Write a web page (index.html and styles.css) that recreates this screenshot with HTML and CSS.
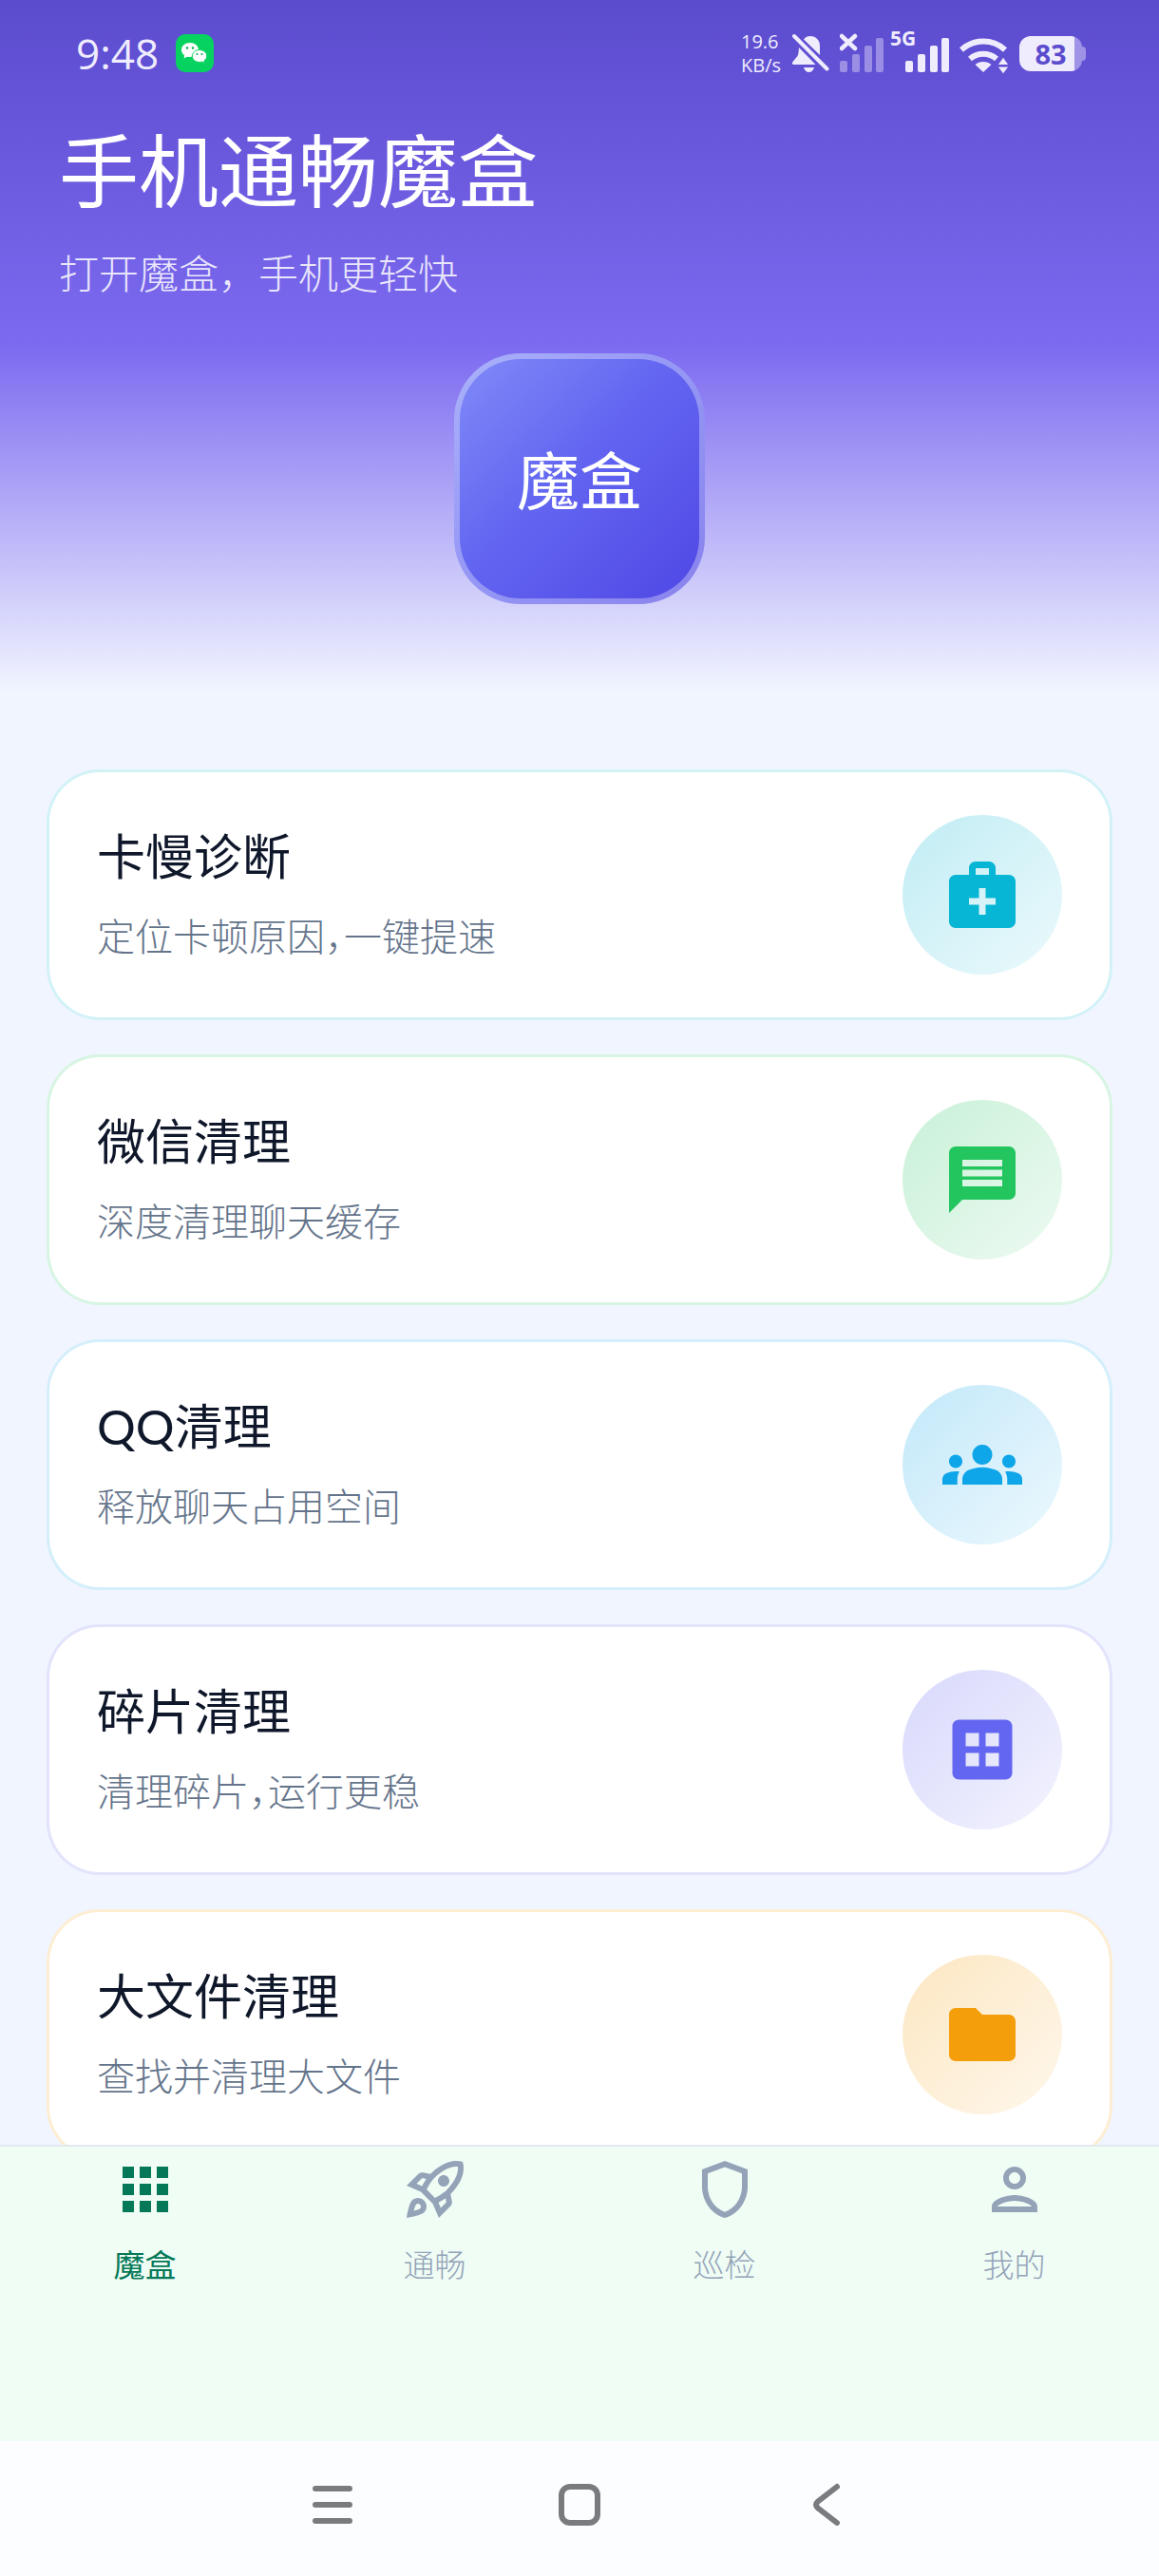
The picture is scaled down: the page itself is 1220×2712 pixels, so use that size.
FILE: index.html
```html
<!DOCTYPE html>
<html lang="zh-CN">
  <head>
    <meta charset="UTF-8" />
    <meta name="viewport" content="width=device-width, initial-scale=1.0" />
    <title>手机通畅魔盒</title>
    <link rel="stylesheet" href="styles.css">
  </head>
  <body>
    <main class="content">
      <header class="hero">
        <div class="status-bar">
          <span class="status-time">9:48</span>
          <svg class="status-app" width="40" height="40" viewBox="0 0 40 40">
            <rect width="40" height="40" rx="10" fill="#06d35f" />
            <path d="M15 9C9.900 9 6 12.300 6 16.500c0 2.400 1.300 4.400 3.200 5.800L8.500 25.500l3.300-1.800c1 .300 2 .400 3.200.400 5 0 9-3.300 9-7.500S20 9 15 9z" fill="#fff" />
            <path d="M25 16.500c-4.300 0-7.700 2.900-7.700 6.500s3.400 6.500 7.700 6.500c.900 0 1.800-.100 2.600-.400l2.900 1.500-.700-2.600c1.700-1.200 2.900-3 2.900-5 0-3.600-3.400-6.500-7.700-6.500z" fill="#fff" stroke="#06d35f" />
            <g fill="#06a84d">
              <circle cx="12" cy="14.500" r="1.200" />
              <circle cx="18" cy="14.500" r="1.200" />
              <circle cx="22.500" cy="21" r="1" />
              <circle cx="27.500" cy="21" r="1" />
            </g>
          </svg>
          <div class="status-right">
            <span class="status-speed">19.6<br />KB/s</span>
            <svg width="40" height="44" viewBox="0 0 40 44" fill="currentColor">
              <path d="M13 7.500C14.500 5 17 4 20 4c6 0 10 4.500 10 10.500v9.500z" />
              <path d="M8 16 25.500 34H2.500c-1.600 0-2-1.800-1-3L6.500 25c1.200-2.500 1.200-6 1.500-9z" />
              <path d="M13 37h11c-1 3.500-3 5-5.500 5S14 40.500 13 37z" />
              <path d="M3 4 37.500 38.500" stroke="currentColor" stroke-width="4" stroke-linecap="round" />
            </svg>
            <svg width="46" height="44" viewBox="0 0 46 44" fill="currentColor">
              <path d="M2 4 16 17M16 4 2 17" stroke="currentColor" stroke-width="4.500" stroke-linecap="round" />
              <g opacity=".4">
                <rect x="0" y="30" width="8" height="12" rx="2" />
                <rect x="13" y="23" width="8" height="19" rx="2" />
                <rect x="26" y="14" width="8" height="28" rx="2" />
                <rect x="38" y="6" width="8" height="36" rx="2" />
              </g>
            </svg>
            <div class="signal">
              <span class="signal-type">5G</span>
              <svg width="46" height="44" viewBox="0 0 46 44" fill="currentColor">
                <rect x="0" y="30" width="8" height="12" rx="2" />
                <rect x="13" y="23" width="8" height="19" rx="2" />
                <rect x="26" y="14" width="8" height="28" rx="2" />
                <rect x="38" y="6" width="8" height="36" rx="2" />
              </svg>
            </div>
            <svg class="wifi" width="52" height="44" viewBox="0 0 52 44">
              <g fill="none" stroke="currentColor" stroke-width="6">
                <path d="M2 18.500C15 6.500 35 6.500 48 18.500" />
                <path d="M11 28c8-7 20-7 28 0" />
              </g>
              <path d="M16.500 34c4.500-4 12.500-4 17 0L25 42z" fill="currentColor" />
              <path d="M46 26l6 8.500H40zM46 44l6-8H40z" fill="currentColor" stroke="#614fd3" stroke-width="1" />
            </svg>
            <div class="battery">
              <span class="battery-level">83</span>
            </div>
          </div>
        </div>
        <h1>手机通畅魔盒</h1>
        <p class="slogan">打开魔盒，手机更轻快</p>
        <button type="button" class="magic-box">魔盒</button>
      </header>

      <section class="card-list">
        <a class="card card-cyan" href="#diagnose">
          <div class="card-text">
            <h2>卡慢诊断</h2>
            <p>定位卡顿原因，一键提速</p>
          </div>
          <span class="card-icon">
            <svg viewBox="0 0 24 24"><path d="M20 6h-4V4c0-1.100-.900-2-2-2h-4c-1.100 0-2 .900-2 2v2H4c-1.100 0-2 .900-2 2v12c0 1.100.900 2 2 2h16c1.100 0 2-.900 2-2V8c0-1.100-.900-2-2-2zM10 4h4v2h-4V4zm6 11h-3v3h-2v-3H8v-2h3v-3h2v3h3v2z" /></svg>
          </span>
        </a>
        <a class="card card-green" href="#wechat">
          <div class="card-text">
            <h2>微信清理</h2>
            <p>深度清理聊天缓存</p>
          </div>
          <span class="card-icon">
            <svg viewBox="0 0 24 24"><path d="M20 2H4c-1.100 0-1.990.900-1.990 2L2 22l4-4h14c1.100 0 2-.900 2-2V4c0-1.100-.900-2-2-2zm-2 12H6v-2h12v2zm0-3H6V9h12v2zm0-3H6V6h12v2z" /></svg>
          </span>
        </a>
        <a class="card card-sky" href="#qq">
          <div class="card-text">
            <h2>QQ清理</h2>
            <p>释放聊天占用空间</p>
          </div>
          <span class="card-icon">
            <svg viewBox="0 0 24 24"><path d="M12 12.750c1.630 0 3.070.390 4.240.900 1.080.480 1.760 1.560 1.760 2.730V18H6v-1.610c0-1.180.680-2.260 1.760-2.730 1.170-.520 2.610-.910 4.240-.910zM4 13c1.100 0 2-.900 2-2s-.900-2-2-2-2 .900-2 2 .900 2 2 2zm1.130 1.100c-.370-.060-.740-.100-1.130-.100-.990 0-1.930.210-2.780.580C.480 14.900 0 15.620 0 16.430V18h4.500v-1.610c0-.830.230-1.610.630-2.290zM20 13c1.100 0 2-.900 2-2s-.900-2-2-2-2 .900-2 2 .900 2 2 2zm4 3.430c0-.810-.480-1.530-1.220-1.850-.850-.370-1.790-.580-2.780-.580-.390 0-.760.040-1.130.100.400.680.630 1.460.630 2.290V18H24v-1.570zM12 6c1.660 0 3 1.340 3 3s-1.340 3-3 3-3-1.340-3-3 1.340-3 3-3z" /></svg>
          </span>
        </a>
        <a class="card card-indigo" href="#fragment">
          <div class="card-text">
            <h2>碎片清理</h2>
            <p>清理碎片，运行更稳</p>
          </div>
          <span class="card-icon">
            <svg viewBox="0 0 24 24"><path d="M19 3H5c-1.100 0-2 .900-2 2v14c0 1.100.900 2 2 2h14c1.100 0 2-.900 2-2V5c0-1.100-.900-2-2-2zM11 17H7v-4h4v4zm0-6H7V7h4v4zm6 6h-4v-4h4v4zm0-6h-4V7h4v4z" /></svg>
          </span>
        </a>
        <a class="card card-amber" href="#bigfile">
          <div class="card-text">
            <h2>大文件清理</h2>
            <p>查找并清理大文件</p>
          </div>
          <span class="card-icon">
            <svg viewBox="0 0 24 24"><path d="M10 4H4c-1.100 0-1.990.900-1.990 2L2 18c0 1.100.900 2 2 2h16c1.100 0 2-.900 2-2V8c0-1.100-.900-2-2-2h-8l-2-2z" /></svg>
          </span>
        </a>
      </section>
    </main>

    <nav class="tab-bar">
      <a class="tab active" href="#box">
        <svg viewBox="0 0 24 24"><path d="M4 8h4V4H4v4zm6 12h4v-4h-4v4zm-6 0h4v-4H4v4zm0-6h4v-4H4v4zm6 0h4v-4h-4v4zm6-10v4h4V4h-4zm-6 4h4V4h-4v4zm6 6h4v-4h-4v4zm0 6h4v-4h-4v4z" /></svg>
        <span>魔盒</span>
      </a>
      <a class="tab" href="#boost">
        <svg viewBox="0 0 24 24"><path d="M6 15c-.830 0-1.580.340-2.120.880C2.700 17.060 2 22 2 22s4.940-.700 6.120-1.880C8.660 19.580 9 18.830 9 18c0-1.660-1.340-3-3-3zm.710 3.710c-.280.280-2.170.760-2.170.760s.470-1.880.760-2.170c.170-.190.420-.300.700-.300.550 0 1 .450 1 1 0 .280-.110.530-.290.710zm10.710-5.060c6.360-6.360 4.240-11.310 4.240-11.310S16.710.220 10.350 6.580l-2.490-.500c-.650-.130-1.330.080-1.810.550L2 10.690l5 2.140L11.170 17l2.140 5 4.050-4.050c.470-.470.680-1.150.550-1.810l-.490-2.490zM7.410 10.830l-1.910-.820 1.970-1.970 1.440.290c-.570.830-1.080 1.700-1.500 2.500zm6.580 7.670-.820-1.910c.800-.420 1.670-.930 2.490-1.500l.290 1.440-1.960 1.970zM16 12.240c-1.320 1.320-3.380 2.400-4.040 2.730l-2.930-2.930c.320-.650 1.400-2.710 2.730-4.040 4.680-4.680 8.230-3.990 8.230-3.990s.690 3.550-3.990 8.230zM15 11c1.100 0 2-.900 2-2s-.900-2-2-2-2 .900-2 2 .900 2 2 2z" /></svg>
        <span>通畅</span>
      </a>
      <a class="tab" href="#inspect">
        <svg viewBox="0 0 24 24"><path d="M12 2 4 5v6.090c0 5.050 3.410 9.760 8 10.910 4.590-1.150 8-5.860 8-10.910V5l-8-3zm6 9.090c0 4-2.550 7.700-6 8.830-3.450-1.130-6-4.820-6-8.830v-4.700l6-2.250 6 2.250v4.700z" /></svg>
        <span>巡检</span>
      </a>
      <a class="tab" href="#mine">
        <svg viewBox="0 0 24 24"><path d="M12 6c1.100 0 2 .900 2 2s-.900 2-2 2-2-.900-2-2 .900-2 2-2m0 10c2.700 0 5.800 1.290 6 2H6c.230-.720 3.310-2 6-2m0-12C9.790 4 8 5.790 8 8s1.790 4 4 4 4-1.790 4-4-1.790-4-4-4zm0 10c-2.670 0-8 1.340-8 4v2h16v-2c0-2.660-5.330-4-8-4z" /></svg>
        <span>我的</span>
      </a>
    </nav>

    <footer class="system-nav">
      <button type="button" aria-label="最近任务">
        <svg viewBox="0 0 48 48"><path d="M6 7h36M6 24h36M6 41h36" /></svg>
      </button>
      <button type="button" aria-label="主屏幕">
        <svg viewBox="0 0 48 48"><rect x="5" y="5" width="38" height="38" rx="9" /></svg>
      </button>
      <button type="button" aria-label="返回">
        <svg viewBox="0 0 48 48"><path d="M35 5 15 20.500Q11 24 15 27.500L35 43" /></svg>
      </button>
    </footer>
  </body>
</html>
```
FILE: styles.css
```css
* {
  box-sizing: border-box;
}
body {
  margin: 0;
  height: 100vh;
  display: flex;
  flex-direction: column;
  background-color: #f1f5ff;
  color: #0f172a;
  font-family: "Noto Sans CJK SC", "Noto Sans", sans-serif;
}
h1,
h2,
p {
  margin: 0;
}
a {
  color: inherit;
  text-decoration: none;
}
button {
  padding: 0;
  border: none;
  background: none;
  font-family: inherit;
  cursor: pointer;
}
.content {
  flex: 1;
  min-height: 0;
  overflow-y: auto;
  scrollbar-width: none;
}

/* header */
.hero {
  padding: 0 62px 92px;
  background: linear-gradient(#5b4bcd 0, #7c6af0 50%, #f1f5ff 100%);
  color: #fff;
}
.hero h1 {
  margin-top: 14px;
  font-size: 84px;
  line-height: 100px;
  font-weight: 400;
}
.slogan {
  margin-top: 30px;
  font-size: 42px;
  line-height: 60px;
  font-weight: 300;
  color: #e9e6fc;
}
.magic-box {
  display: block;
  width: 264px;
  height: 264px;
  margin: 56px auto 0;
  padding-bottom: 4px;
  border: 6px solid rgba(255, 255, 255, 0.33);
  border-radius: 70px;
  background: linear-gradient(135deg, #818cf8, #6366f1 45%, #4f46e5) border-box;
  color: #fff;
  font-size: 66px;
  font-weight: 400;
}

/* status bar */
.status-bar {
  display: flex;
  align-items: center;
  height: 112px;
  padding: 0 19px 0 18px;
  color: #efecfe;
  font-family: "Open Sans", "Noto Sans", sans-serif;
}
.status-time {
  font-size: 44px;
  line-height: 60px;
}
.status-app {
  margin-left: 18px;
}
.status-right {
  display: flex;
  align-items: center;
  gap: 11px;
  margin-left: auto;
}
.status-speed {
  font-size: 20px;
  line-height: 25px;
}
.signal {
  position: relative;
  padding-left: 12px;
}
.signal svg,
.wifi {
  display: block;
}
.signal-type {
  position: absolute;
  left: -4px;
  top: -8px;
  font-size: 21px;
  line-height: 28px;
  font-weight: 700;
}
.battery {
  position: relative;
  width: 66px;
  height: 37px;
  border-radius: 12px;
  background: linear-gradient(90deg, #efecfe 58px, #9f93e8 58px);
  text-align: center;
}
.battery::after {
  content: "";
  position: absolute;
  left: 66px;
  top: 11px;
  width: 4px;
  height: 15px;
  border-radius: 0 4px 4px 0;
  background: #9f93e8;
}
.battery-level {
  color: #5b4bcd;
  font-size: 29px;
  line-height: 37px;
  font-weight: 700;
}

/* cards */
.card-list {
  display: flex;
  flex-direction: column;
  gap: 36px;
  padding: 82px 49px 36px;
}
.card {
  --tint: 6, 182, 212;
  display: flex;
  align-items: center;
  justify-content: space-between;
  padding: 45px 50px;
  border: 3px solid rgba(var(--tint), 0.18);
  border-radius: 56px;
  background-color: #fff;
}
.card-green {
  --tint: 34, 197, 94;
}
.card-sky {
  --tint: 14, 165, 233;
}
.card-indigo {
  --tint: 99, 102, 241;
}
.card-amber {
  --tint: 245, 158, 11;
}
.card h2 {
  font-family: Lato, "Noto Sans CJK SC", sans-serif;
  font-size: 51px;
  line-height: 64px;
  font-weight: 400;
}
.card p {
  margin-top: 20px;
  font-size: 40px;
  line-height: 60px;
  font-weight: 300;
  color: #64748b;
  font-feature-settings: "halt";
}
.card-icon {
  display: flex;
  align-items: center;
  justify-content: center;
  width: 168px;
  height: 168px;
  border-radius: 50%;
  background: linear-gradient(135deg, rgba(var(--tint), 0.25), rgba(var(--tint), 0.08));
}
.card-icon svg {
  width: 84px;
  height: 84px;
  fill: rgb(var(--tint));
}

/* bottom tabs */
.tab-bar {
  display: flex;
  height: 312px;
  padding-top: 9px;
  border-top: 2px solid #e2e8f0;
  background-color: #effdf5;
}
.tab {
  flex: 1;
  display: flex;
  flex-direction: column;
  align-items: center;
  gap: 18px;
  color: #94a3b8;
  font-size: 33px;
  line-height: 48px;
  font-weight: 300;
}
.tab svg {
  width: 72px;
  height: 72px;
  fill: currentColor;
}
.tab.active {
  color: #047857;
  font-weight: 400;
}

.system-nav {
  display: flex;
  height: 142px;
  padding: 0 18% 8px;
  background-color: #fcfdff;
}
.system-nav button {
  flex: 1;
  display: flex;
  align-items: center;
  justify-content: center;
}
.system-nav svg {
  width: 48px;
  height: 48px;
  fill: none;
  stroke: #7a7b7e;
  stroke-width: 6;
  stroke-linecap: round;
}
```
